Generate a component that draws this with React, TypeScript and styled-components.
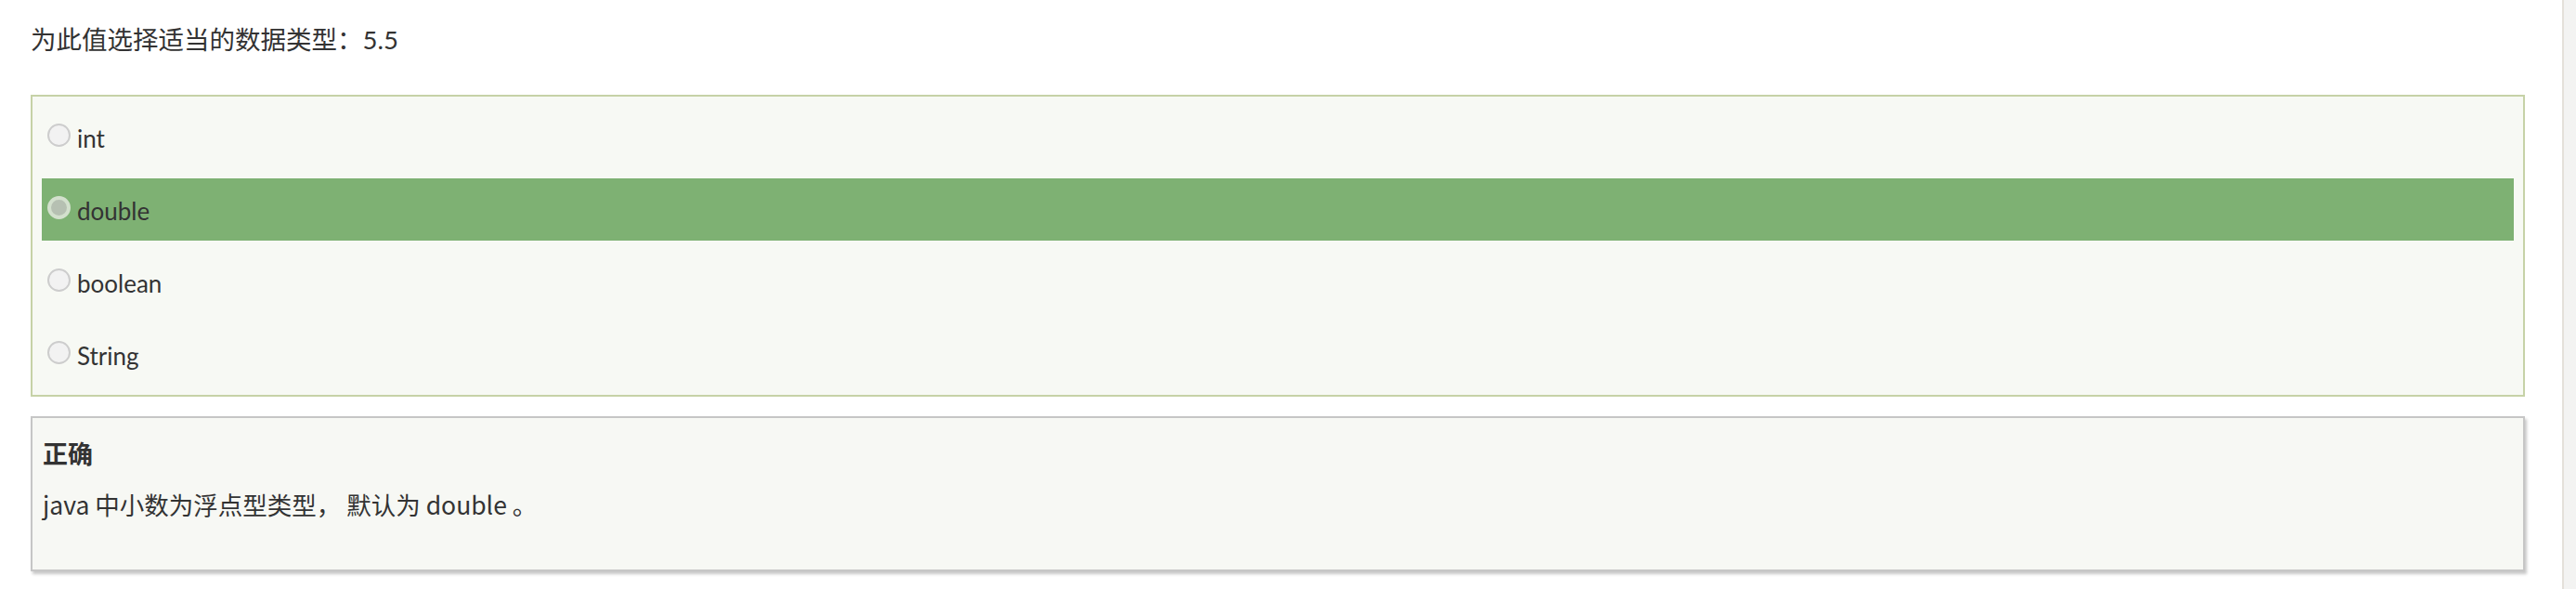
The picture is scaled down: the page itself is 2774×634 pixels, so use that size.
import styled, { createGlobalStyle } from 'styled-components';

const GlobalStyle = createGlobalStyle`
    html, body {
        margin: 0;
        padding: 0;
        background: #ffffff;
    }
    body {
        font-family: 'Lato', 'Noto Sans CJK SC', sans-serif;
        color: #333333;
    }
`;

const Page = styled.div`
    display: flex;
    min-height: 634px;
`;

const Main = styled.main`
    flex: 1;
    padding: 23px 40px 0 33px;
`;

// fake vertical scrollbar track on the right
const ScrollTrack = styled.div`
    width: 13px;
    border-left: 2px solid #e4e0da;
    background: #f3f3f2;
`;

const Question = styled.div`
    font-family: 'Lato', 'Noto Sans CJK SC', sans-serif;
    font-size: 27.5px;
    line-height: 40px;
    color: #333333;
    margin-bottom: 39px;
`;

const Choices = styled.div`
    display: flex;
    flex-direction: column;
    gap: 11px;
    padding: 10px;
    border: 2px solid #c6d2a7;
    background: #f7f9f4;
`;

const Choice = styled.label<{ selected?: boolean }>`
    display: flex;
    align-items: center;
    gap: 7px;
    height: 67px;
    padding-left: 6px;
    background: ${({ selected }) => (selected ? '#7eb173' : 'transparent')};
`;

const Radio = styled.span<{ checked?: boolean }>`
    box-sizing: border-box;
    width: 25px;
    height: 25px;
    border-radius: 50%;
    margin-bottom: 4px;
    border: ${({ checked }) => (checked ? '4px solid #d3e0cd' : '2px solid #cdcdcd')};
    background: ${({ checked }) => (checked ? '#b6c0b2' : '#f2f2f2')};
`;

const ChoiceText = styled.span`
    font-family: 'Lato', sans-serif;
    font-size: 26px;
    color: #333333;
    margin-top: 2px;
`;

const Feedback = styled.div`
    box-sizing: border-box;
    height: 167px;
    margin-top: 21px;
    padding: 20px 11px 0;
    border: 2px solid #c6c6c6;
    background: #f7f8f4;
    box-shadow: 2px 3px 3px rgba(0, 0, 0, 0.22);
`;

const FeedbackTitle = styled.div`
    font-family: 'Noto Sans CJK SC', sans-serif;
    font-size: 27px;
    font-weight: 700;
    line-height: 36px;
    color: #333333;
`;

const FeedbackBody = styled.div`
    font-family: 'Noto Sans CJK SC', sans-serif;
    font-size: 26.5px;
    line-height: 36px;
    color: #333333;
    margin-top: 19px;
`;

const options = ['int', 'double', 'boolean', 'String'];
const answer = 'double';

const App = () => {
    return (
        <Page>
            <GlobalStyle />
            <Main>
                <Question>为此值选择适当的数据类型：5.5</Question>
                <Choices>
                    {options.map((opt) => (
                        <Choice key={opt} selected={opt === answer}>
                            <Radio checked={opt === answer} />
                            <ChoiceText>{opt}</ChoiceText>
                        </Choice>
                    ))}
                </Choices>
                <Feedback>
                    <FeedbackTitle>正确</FeedbackTitle>
                    <FeedbackBody>java 中小数为浮点型类型， 默认为 double 。</FeedbackBody>
                </Feedback>
            </Main>
            <ScrollTrack />
        </Page>
    );
};

export default App;
